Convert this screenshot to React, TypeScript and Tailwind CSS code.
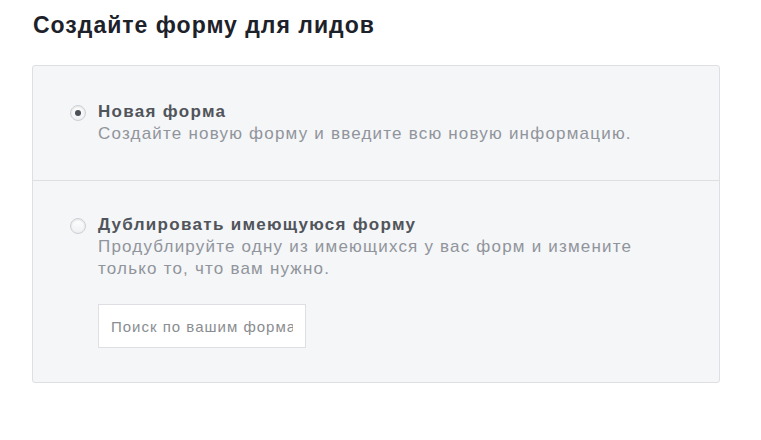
import React, { useState } from 'react';

const Radio = ({ checked }: { checked: boolean }) => (
  <span className="mt-[4px] flex h-[16px] w-[16px] shrink-0 items-center justify-center rounded-full border border-[#ccd0d5] bg-gradient-to-b from-[#ffffff] to-[#eef0f2] shadow-[inset_0_1px_2px_rgba(0,0,0,0.12)]">
    {checked && <span className="h-[6px] w-[6px] rounded-full bg-[#4b4f56]" />}
  </span>
);

const App = () => {
  const [choice, setChoice] = useState('new');
  const [query, setQuery] = useState('');

  return (
    <div className="h-[440px] w-[761px] bg-white pl-[32px] pt-[9px]" style={{ fontFamily: '"Liberation Sans", Arial, sans-serif' }}>
      <h1 className="pl-[1px] text-[23px] font-bold leading-[32px] tracking-[1px] text-[#1d2129]">Создайте форму для лидов</h1>

      <div className="mt-[24px] w-[688px] rounded-[3px] border border-[#dddfe2] bg-[#f5f6f7]">
        <label className="flex cursor-pointer gap-[12px] border-b border-[#dddfe2] pb-[35px] pl-[37px] pr-[40px] pt-[35px]" onClick={() => setChoice('new')}>
          <Radio checked={choice === 'new'} />
          <div>
            <div className="text-[17px] font-bold leading-[22px] tracking-[1.3px] text-[#50545b]">Новая форма</div>
            <div className="text-[17px] leading-[22px] tracking-[1.2px] text-[#90949c]">Создайте новую форму и введите всю новую информацию.</div>
          </div>
        </label>

        <div className="flex gap-[12px] pb-[34px] pl-[37px] pr-[40px] pt-[33px]">
          <span className="cursor-pointer" onClick={() => setChoice('copy')}>
            <Radio checked={choice === 'copy'} />
          </span>
          <div>
            <div className="cursor-pointer text-[17px] font-bold leading-[22px] tracking-[1.3px] text-[#50545b]" onClick={() => setChoice('copy')}>Дублировать имеющуюся форму</div>
            <div className="text-[17px] leading-[22px] tracking-[1.2px] text-[#90949c]">Продублируйте одну из имеющихся у вас форм и измените только то, что вам нужно.</div>
            <input
              className="mt-[24px] block h-[44px] w-[208px] border border-[#dddfe2] bg-white px-[12px] text-[15px] tracking-[1px] text-[#1d2129] outline-none placeholder:text-[#8a8d91]"
              placeholder="Поиск по вашим формам"
              value={query}
              onChange={(e) => setQuery(e.target.value)}
            />
          </div>
        </div>
      </div>
    </div>
  );
};

export default App;
